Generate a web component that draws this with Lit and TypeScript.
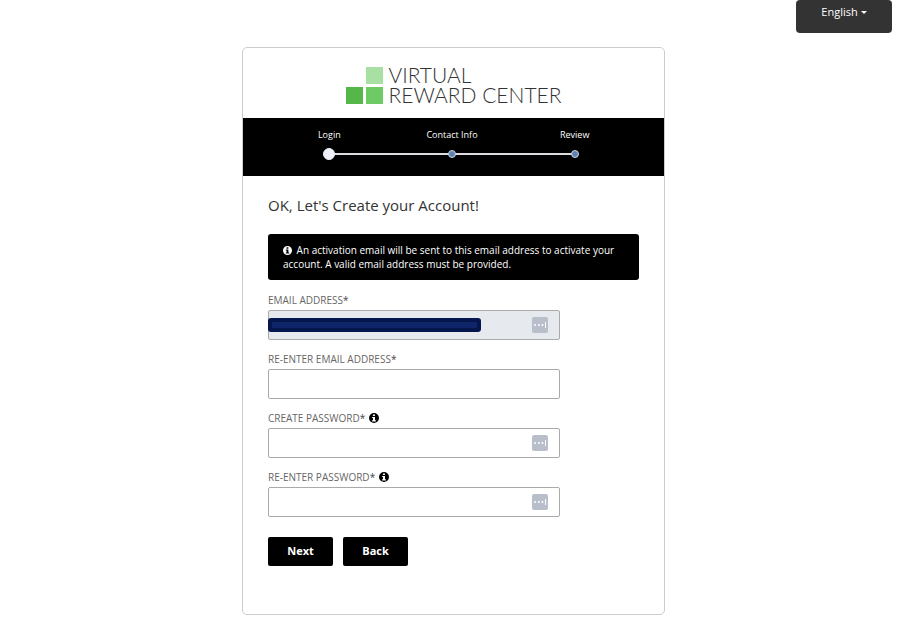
import { LitElement, html, css, svg, nothing } from "lit";
import { customElement } from "lit/decorators.js";
import { classMap } from "lit/directives/class-map.js";

interface Field {
  id: string;
  label: string;
  type: string;
  info?: boolean;
  manager?: boolean;
  masked?: boolean;
}

const STEPS = ["Login", "Contact Info", "Review"];

const FIELDS: Field[] = [
  { id: "email", label: "EMAIL ADDRESS", type: "email", manager: true, masked: true },
  { id: "email2", label: "RE-ENTER EMAIL ADDRESS", type: "email" },
  { id: "password", label: "CREATE PASSWORD", type: "password", info: true, manager: true },
  { id: "password2", label: "RE-ENTER PASSWORD", type: "password", info: true, manager: true },
];

const infoShape = svg`<path fill-rule="evenodd" d="M8 0a8 8 0 1 1 0 16A8 8 0 0 1 8 0ZM6.3 2.2v2.6h3.2V2.2ZM5 6.2v1.7h1.3v3.7H5v1.9h6v-1.9H9.6V6.2Z"/>`;

@customElement("app-root")
export class AppRoot extends LitElement {
  static styles = css`
    :host {
      display: block;
      position: relative;
      font-family: "Open Sans", sans-serif;
      color: #333;
      background: #fff;
    }
    * {
      box-sizing: border-box;
    }
    .language {
      position: absolute;
      top: 0;
      right: 12px;
      width: 96px;
      height: 33px;
      padding: 0 0 9px;
      border: 0;
      border-radius: 4px;
      background: #333;
      color: #fff;
      font: 11px/16px "Open Sans", sans-serif;
      display: flex;
      align-items: center;
      justify-content: center;
      gap: 3px;
    }
    .caret {
      border: 3px solid transparent;
      border-top-color: #fff;
      border-bottom: 0;
    }
    .page {
      display: grid;
      grid-template-columns: 1fr minmax(0, 423px) 1fr;
      padding: 47px 12px 8px 15px;
    }
    .card {
      grid-column: 2;
      border: 1px solid #ccc;
      border-radius: 5px;
      padding-bottom: 48px;
    }
    .brand {
      display: flex;
      justify-content: center;
      align-items: center;
      gap: 6px;
      height: 70px;
      padding-top: 4px;
    }
    .mark {
      display: block;
      width: 37px;
      height: 37px;
    }
    .wordmark {
      font: 300 21px/20px Lato, sans-serif;
      color: #333;
      white-space: nowrap;
    }
    .wordmark span {
      display: block;
    }
    .steps {
      display: grid;
      grid-template-columns: repeat(3, 1fr);
      list-style: none;
      margin: 0;
      padding: 10px 28px 16px 25px;
      background: #000;
      color: #fff;
      font-size: 9px;
      line-height: 14px;
      text-align: center;
    }
    .step {
      display: grid;
      grid-template-rows: 14px 18px;
      align-items: center;
      justify-items: center;
      position: relative;
    }
    .step:not(:last-child)::after {
      content: "";
      position: absolute;
      left: 50%;
      width: 100%;
      bottom: 5px;
      height: 2px;
      background: #dcdce0;
    }
    .dot {
      width: 8px;
      height: 8px;
      margin-top: 6px;
      border: 1px solid #c8d4e2;
      border-radius: 50%;
      background: #5f83b0;
      position: relative;
      z-index: 1;
    }
    .current .dot {
      width: 12px;
      height: 12px;
      border-color: #eef2f8;
      background: #eef2f8;
    }
    .body {
      padding: 17px 25px 0;
    }
    h1 {
      margin: 0 0 17px;
      font-size: 15px;
      line-height: 24px;
      font-weight: 400;
    }
    .alert {
      margin: 0 0 12px;
      padding: 9px 15px;
      border-radius: 3px;
      background: #000;
      color: #fff;
      font-size: 10px;
      line-height: 14px;
    }
    .alert svg {
      width: 9px;
      height: 9px;
      margin-right: 2px;
      vertical-align: -1px;
      fill: currentColor;
    }
    .fields {
      display: grid;
      gap: 11px;
      max-width: 292px;
    }
    .label {
      display: flex;
      align-items: center;
      gap: 4px;
      height: 18px;
      padding-bottom: 2px;
      font-size: 10px;
      line-height: 16px;
      color: #666;
    }
    .label svg {
      display: block;
      width: 10px;
      height: 10px;
      fill: #000;
    }
    .star {
      color: #444;
    }
    .control {
      position: relative;
      display: flex;
    }
    input {
      width: 100%;
      height: 30px;
      padding: 0 36px 0 8px;
      border: 1px solid #aaa;
      border-radius: 2px;
      background: #fff;
      font: 11px "Open Sans", sans-serif;
      color: #333;
    }
    .masked input {
      background: #e6eaee;
    }
    .mask {
      position: absolute;
      left: 0;
      top: 50%;
      transform: translateY(-50%);
      width: 73%;
      height: 14px;
      border: 4px solid #04164c;
      border-radius: 3px;
      background: #0e256a;
    }
    .manager {
      position: absolute;
      right: 12px;
      top: 7px;
      width: 16px;
      height: 16px;
    }
    .actions {
      display: flex;
      gap: 10px;
      margin-top: 20px;
    }
    .actions button {
      width: 65px;
      height: 29px;
      padding: 0 0 1px;
      border: 0;
      border-radius: 2px;
      background: #000;
      color: #fff;
      font: 700 11px/16px "Open Sans", sans-serif;
    }
  `;

  private renderInfo() {
    return html`<svg viewBox="0 0 16 16" aria-hidden="true">${infoShape}</svg>`;
  }

  private renderField(f: Field) {
    return html`
      <div>
        <label class="label" for=${f.id}>
          <span>${f.label}<span class="star">*</span></span>
          ${f.info ? this.renderInfo() : nothing}
        </label>
        <div class=${classMap({ control: true, masked: !!f.masked })}>
          <input id=${f.id} type=${f.type} />
          ${f.masked ? html`<span class="mask"></span>` : nothing}
          ${f.manager
            ? html`<svg class="manager" viewBox="0 0 16 16" aria-hidden="true">
                <rect width="16" height="16" rx="2" fill="#b8bfca" />
                <g fill="#fff">
                  <circle cx="3" cy="8" r="1" />
                  <circle cx="6.8" cy="8" r="1" />
                  <circle cx="10.5" cy="8" r="1" />
                  <rect x="13" y="5" width="1" height="6" />
                </g>
              </svg>`
            : nothing}
        </div>
      </div>
    `;
  }

  render() {
    return html`
      <button class="language" type="button">English <span class="caret"></span></button>
      <main class="page">
        <section class="card">
          <div class="brand">
            <svg class="mark" viewBox="0 0 37 37" aria-hidden="true">
              <rect x="20" y="0" width="17" height="17" fill="#a8dfa2" />
              <rect x="0" y="20" width="17" height="17" fill="#55b74a" />
              <rect x="20" y="20" width="17" height="17" fill="#6dca65" />
            </svg>
            <div class="wordmark"><span>VIRTUAL</span><span>REWARD CENTER</span></div>
          </div>
          <ol class="steps">
            ${STEPS.map(
              (s, i) => html`<li class=${classMap({ step: true, current: i === 0 })}>
                <span>${s}</span><span class="dot"></span>
              </li>`
            )}
          </ol>
          <form class="body" @submit=${(e: Event) => e.preventDefault()}>
            <h1>OK, Let's Create your Account!</h1>
            <p class="alert">
              ${this.renderInfo()} An activation email will be sent to this email address to
              activate your account. A valid email address must be provided.
            </p>
            <div class="fields">${FIELDS.map((f) => this.renderField(f))}</div>
            <div class="actions">
              <button type="submit">Next</button>
              <button type="button">Back</button>
            </div>
          </form>
        </section>
      </main>
    `;
  }
}
